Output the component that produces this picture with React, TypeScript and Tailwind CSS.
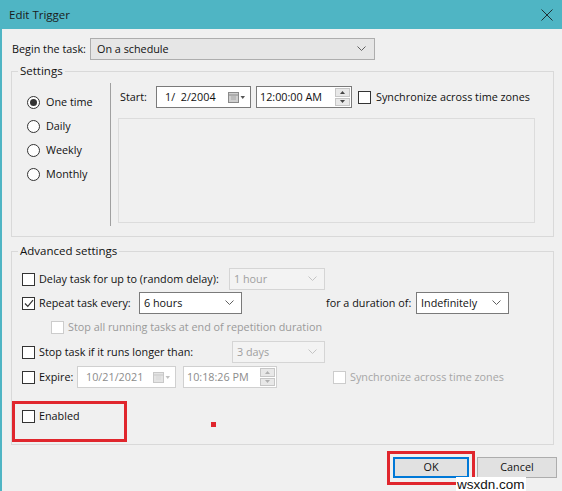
import React from 'react';

const font = { fontFamily: '"Open Sans", "Noto Sans", sans-serif' };

const Chevron = ({ disabled }: { disabled?: boolean }) => (
  <svg width="9" height="6" viewBox="0 0 9 6" className="shrink-0">
    <polyline points="0.5,0.5 4.5,4.5 8.5,0.5" fill="none" stroke={disabled ? '#c4c4c4' : '#606060'} strokeWidth="1" />
  </svg>
);

const Check = ({ checked, disabled }: { checked?: boolean; disabled?: boolean }) => (
  <span
    className={`w-[13px] h-[13px] shrink-0 border bg-white flex items-center justify-center ${
      disabled ? 'border-[#cccccc]' : 'border-[#333333]'
    }`}
  >
    {checked && (
      <svg width="10" height="9" viewBox="0 0 10 9">
        <polyline points="1,4.5 3.8,7.3 9,1.2" fill="none" stroke="#333" strokeWidth="1.2" />
      </svg>
    )}
  </span>
);

const Radio = ({ checked, label }: { checked?: boolean; label: string }) => (
  <div className="h-[24px] flex items-center gap-[6px]">
    <span className="w-[13px] h-[13px] rounded-full border border-[#333333] bg-white flex items-center justify-center">
      {checked && <span className="w-[7px] h-[7px] rounded-full bg-[#333333]" />}
    </span>
    <span>{label}</span>
  </div>
);

const Select = ({ value, width, disabled }: { value: string; width: string; disabled?: boolean }) => (
  <div
    className={`${width} h-[22px] flex items-center justify-between pl-[4px] pr-[7px] border ${
      disabled ? 'border-[#d5d5d5] bg-[#f3f3f3] text-[#a0a0a0]' : 'border-[#7a7a7a] bg-white'
    }`}
  >
    <span>{value}</span>
    <Chevron disabled={disabled} />
  </div>
);

const CalIcon = ({ disabled }: { disabled?: boolean }) => (
  <svg width="18" height="11" viewBox="0 0 18 11" className="shrink-0">
    <rect x="0.5" y="0.5" width="10" height="10" fill={disabled ? '#e4e4e4' : '#cfcfcf'} stroke={disabled ? '#c8c8c8' : '#8a8a8a'} />
    <line x1="1" y1="3" x2="10" y2="3" stroke={disabled ? '#c8c8c8' : '#8a8a8a'} />
    <line x1="3" y1="5" x2="8" y2="5" stroke={disabled ? '#d8d8d8' : '#a8a8a8'} />
    <line x1="3" y1="7" x2="8" y2="7" stroke={disabled ? '#d8d8d8' : '#a8a8a8'} />
    <polygon points="12.5,4 17,4 14.75,7" fill={disabled ? '#c0c0c0' : '#555'} />
  </svg>
);

const DateBox = ({ value, width, disabled }: { value: string; width: string; disabled?: boolean }) => (
  <div
    className={`${width} h-[22px] flex items-center justify-between pl-[8px] pr-[4px] border ${
      disabled ? 'border-[#d0d0d0] bg-white text-[#8c8c8c]' : 'border-[#7a7a7a] bg-white'
    }`}
  >
    <span className="whitespace-pre">{value}</span>
    <CalIcon disabled={disabled} />
  </div>
);

const TimeBox = ({ value, width, disabled }: { value: string; width: string; disabled?: boolean }) => (
  <div
    className={`${width} h-[22px] flex items-center justify-between pl-[3px] pr-[1px] border ${
      disabled ? 'border-[#d0d0d0] bg-white text-[#8c8c8c]' : 'border-[#7a7a7a] bg-white'
    }`}
  >
    <span>{value}</span>
    <div className="w-[15px] h-[18px] flex flex-col gap-[1px]">
      <div className="flex-1 bg-[#e8e8e8] border border-[#c6c6c6] flex items-center justify-center">
        <svg width="5" height="3" viewBox="0 0 5 3">
          <polygon points="0,3 5,3 2.5,0" fill={disabled ? '#b0b0b0' : '#444'} />
        </svg>
      </div>
      <div className="flex-1 bg-[#e8e8e8] border border-[#c6c6c6] flex items-center justify-center">
        <svg width="5" height="3" viewBox="0 0 5 3">
          <polygon points="0,0 5,0 2.5,3" fill={disabled ? '#b0b0b0' : '#444'} />
        </svg>
      </div>
    </div>
  </div>
);

export default function App() {
  return (
    <div className="w-[562px] h-[491px] bg-[#f0f0f0] text-[10.8px] text-[#111] relative overflow-hidden" style={font}>
      {/* title bar */}
      <div className="h-[29px] bg-[#4fb5c4] flex items-center justify-between pl-[9px] pr-[9px]">
        <span className="text-[11.5px] text-[#1b1b1b]">Edit Trigger</span>
        <svg width="12" height="12" viewBox="0 0 12 12">
          <line x1="0.5" y1="0.5" x2="11.5" y2="11.5" stroke="#1f2f33" strokeWidth="1" />
          <line x1="11.5" y1="0.5" x2="0.5" y2="11.5" stroke="#1f2f33" strokeWidth="1" />
        </svg>
      </div>

      <div className="border-l-2 border-[#4fb5c4] h-[462px] pl-[9px] pr-[8px]">
        {/* begin the task */}
        <div className="pt-[9px] flex items-center">
          <span className="w-[79px] pl-[1px]">Begin the task:</span>
          <div className="w-[285px] h-[22px] flex items-center justify-between pl-[6px] pr-[8px] border border-[#adadad] bg-[#e6e6e6]">
            <span>On a schedule</span>
            <Chevron />
          </div>
        </div>

        {/* settings group */}
        <fieldset className="mt-[3px] h-[174px] border border-[#d9d9d9] px-0">
          <legend className="ml-[6px] px-[2px] leading-[16px] text-[11.5px]">Settings</legend>
          <div className="flex">
            <div className="w-[98px] pl-[15px] pt-[11px]">
              <Radio checked label="One time" />
              <Radio label="Daily" />
              <Radio label="Weekly" />
              <Radio label="Monthly" />
            </div>
            <div className="mt-[4px] h-[143px] border-l border-[#a0a0a0]" />
            <div className="pl-[7px] pt-[7px]">
              <div className="flex items-center h-[22px]">
                <span className="w-[38px] pl-[2px]">Start:</span>
                <DateBox value="1/  2/2004" width="w-[95px]" />
                <div className="w-[5px]" />
                <TimeBox value="12:00:00 AM" width="w-[96px]" />
                <div className="ml-[6px] flex items-center gap-[5px]">
                  <Check />
                  <span>Synchronize across time zones</span>
                </div>
              </div>
              <div className="mt-[10px] w-[417px] h-[105px] border border-[#dcdcdc]" />
            </div>
          </div>
        </fieldset>

        {/* advanced settings */}
        <fieldset className="mt-[6px] h-[202px] border border-[#d9d9d9] px-0">
          <legend className="ml-[6px] px-[2px] leading-[16px] text-[11.5px]">Advanced settings</legend>
          <div className="pl-[10px] pt-[9px]">
            <div className="h-[22px] flex items-center">
              <div className="w-[207px] flex items-center gap-[4px]">
                <Check />
                <span>Delay task for up to (random delay):</span>
              </div>
              <Select value="1 hour" width="w-[96px]" disabled />
            </div>

            <div className="mt-[2px] h-[22px] flex items-center">
              <div className="w-[117px] flex items-center gap-[4px]">
                <Check checked />
                <span>Repeat task every:</span>
              </div>
              <Select value="6 hours" width="w-[103px]" />
              <span className="ml-[84px] w-[90px]">for a duration of:</span>
              <Select value="Indefinitely" width="w-[93px]" />
            </div>

            <div className="mt-[2px] h-[22px] flex items-center pl-[29px] gap-[4px] text-[#9a9a9a]">
              <Check disabled />
              <span>Stop all running tasks at end of repetition duration</span>
            </div>

            <div className="mt-[3px] h-[22px] flex items-center">
              <div className="w-[210px] flex items-center gap-[4px]">
                <Check />
                <span>Stop task if it runs longer than:</span>
              </div>
              <Select value="3 days" width="w-[93px]" disabled />
            </div>

            <div className="mt-[3px] h-[22px] flex items-center">
              <div className="w-[55px] flex items-center gap-[4px]">
                <Check />
                <span>Expire:</span>
              </div>
              <DateBox value="10/21/2021" width="w-[99px]" disabled />
              <div className="w-[7px]" />
              <TimeBox value="10:18:26 PM" width="w-[94px]" disabled />
              <div className="ml-[56px] flex items-center gap-[4px] text-[#a6a6a6]">
                <Check disabled />
                <span>Synchronize across time zones</span>
              </div>
            </div>

            <div className="mt-[17px] h-[22px] flex items-center gap-[4px]">
              <Check />
              <span>Enabled</span>
            </div>
          </div>
        </fieldset>

        {/* buttons */}
        <div className="mt-[12px] flex justify-end gap-[8px] mr-[-3px]">
          <button className="w-[76px] h-[21px] bg-[#e1e1e1] border-2 border-[#0078d7] flex items-center justify-center">
            OK
          </button>
          <button className="w-[80px] h-[21px] bg-[#e1e1e1] border border-[#adadad] flex items-center justify-center">
            Cancel
          </button>
        </div>
      </div>

      {/* annotation overlays */}
      <div className="absolute left-[12px] top-[401px] w-[115px] h-[41px] border-[3px] border-[#e0262d]" />
      <div className="absolute left-[211px] top-[422px] w-[5px] h-[5px] bg-[#e0262d]" />
      <div className="absolute left-[387px] top-[451px] w-[88px] h-[34px] border-[3px] border-[#e0262d]" />
      <div
        className="absolute left-[456px] top-[477px] px-[1px] h-[15px] leading-[15px] bg-white text-[13.5px] text-[#111]"
        style={{ fontFamily: '"Liberation Sans", Arial, sans-serif' }}
      >
        wsxdn.com
      </div>
    </div>
  );
}
